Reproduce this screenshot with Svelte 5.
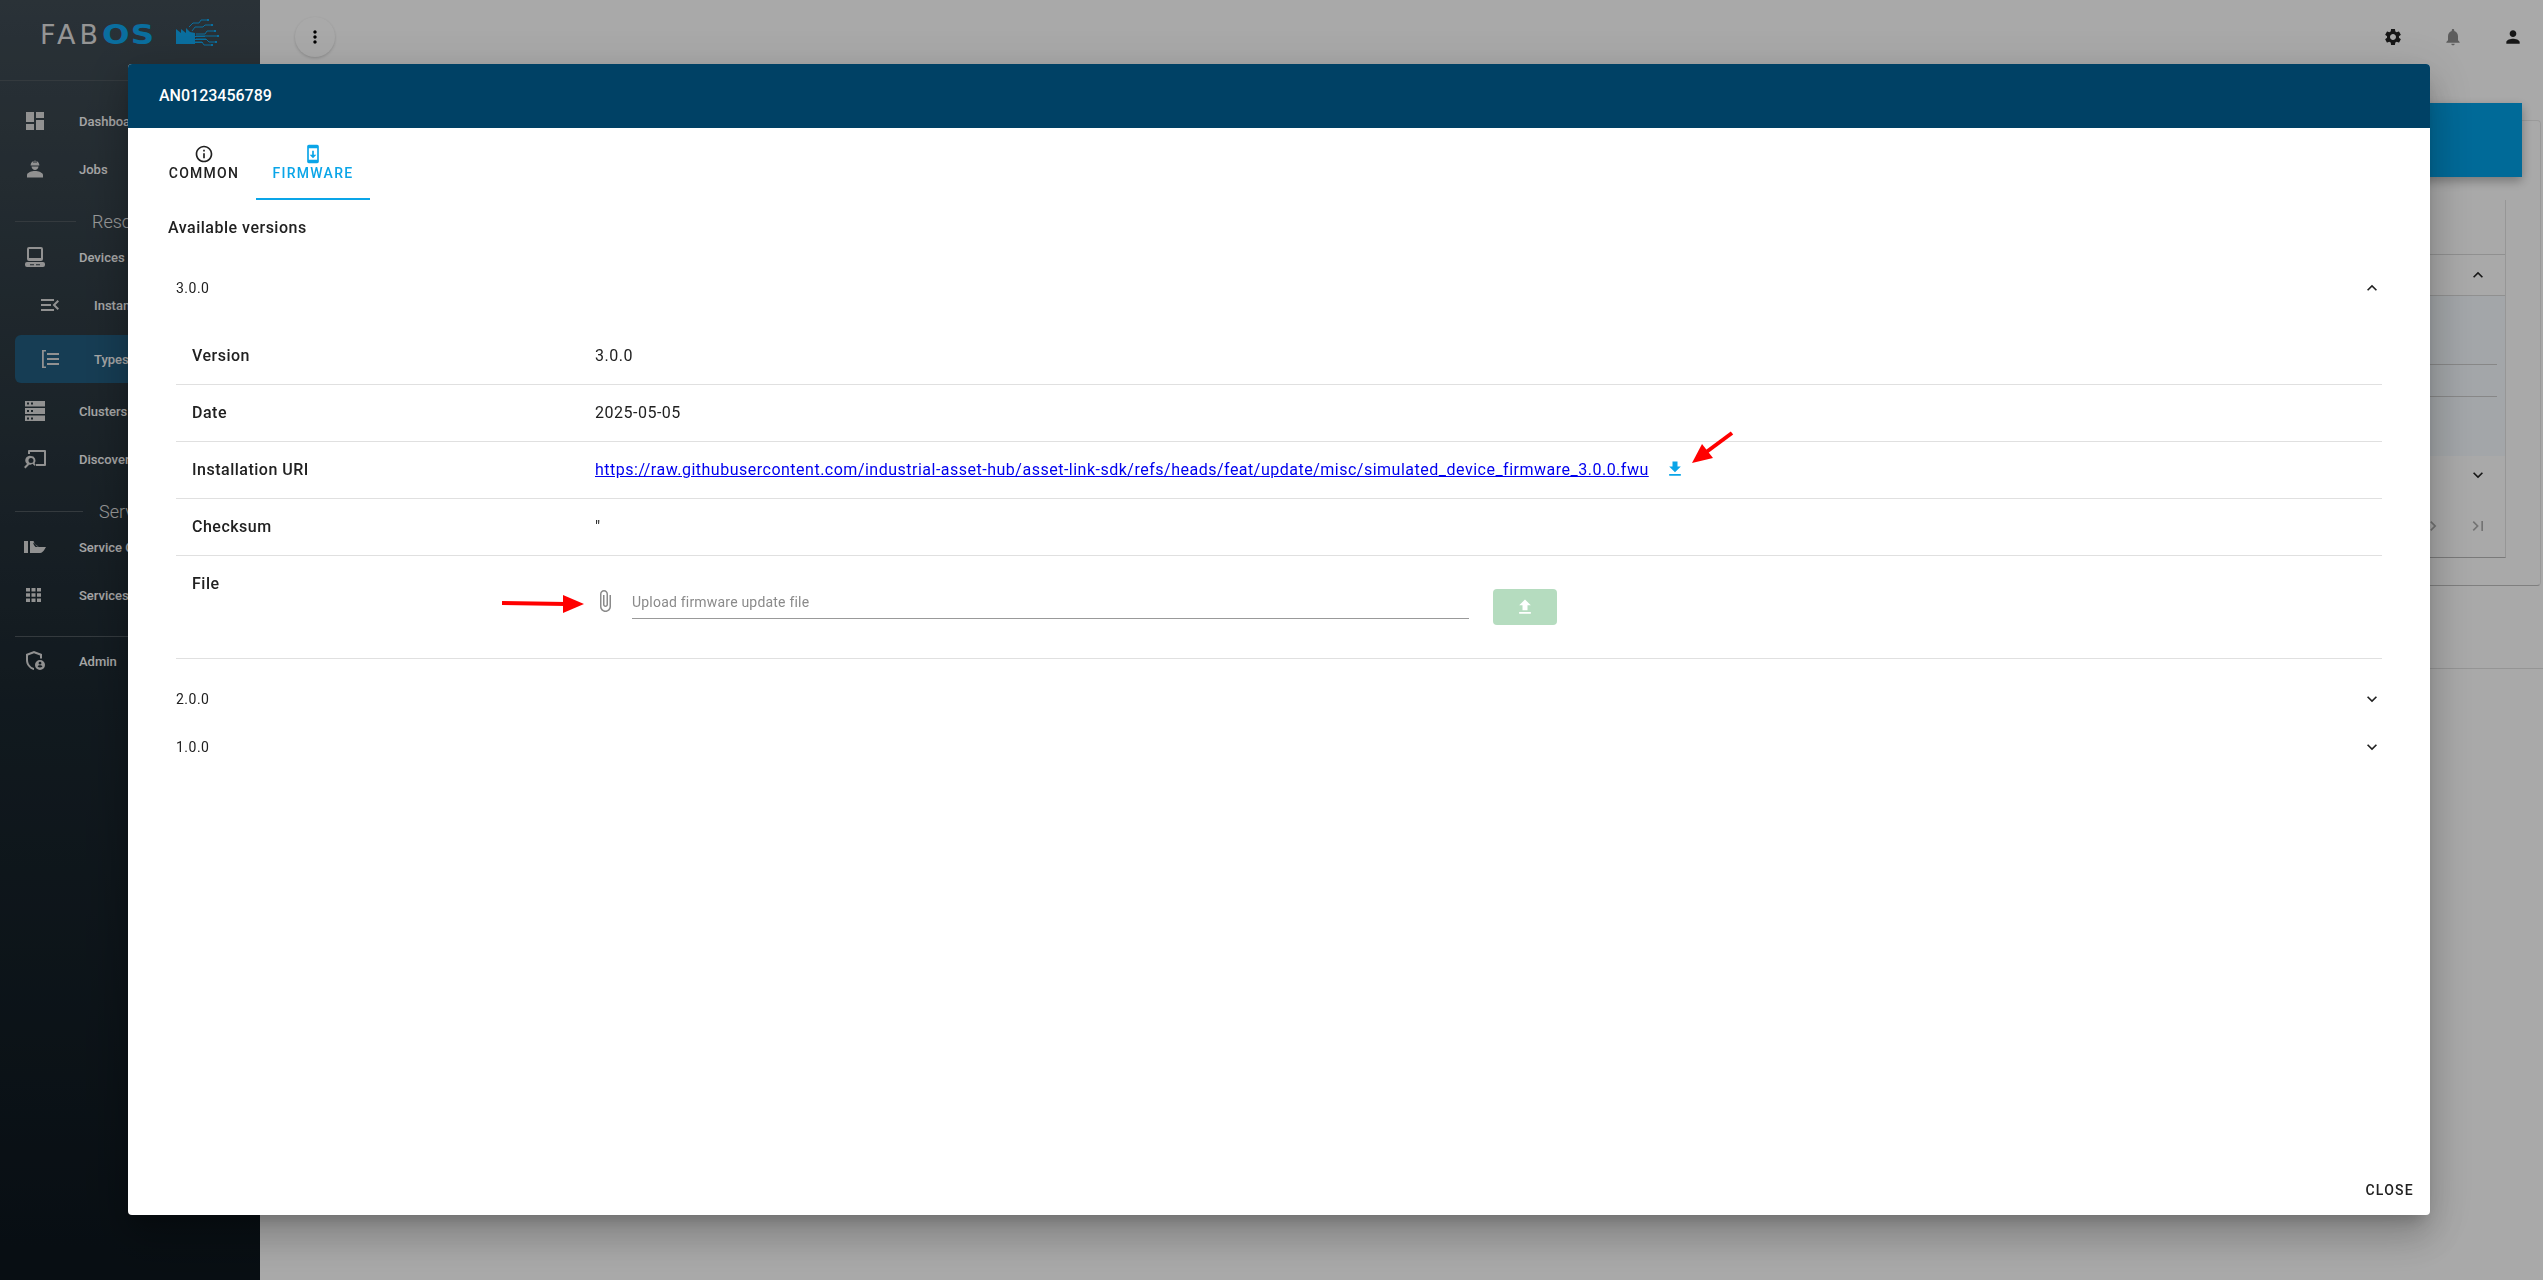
<script>
  const nav = [
    { label: "Dashboard", icon: "dashboard" },
    { label: "Jobs", icon: "jobs" },
    { section: "Resources", rule: 61 },
    { label: "Devices", icon: "devices" },
    { label: "Instances", icon: "instances", sub: true },
    { label: "Types", icon: "types", sub: true, active: true },
    { label: "Clusters", icon: "clusters" },
    { label: "Discovery", icon: "discovery" },
    { section: "Services", rule: 68 },
    { label: "Service Catalog", icon: "catalog" },
    { label: "Services", icon: "services" },
    { divider: true },
    { label: "Admin", icon: "admin" }
  ];

  const paths = {
    dashboard: "M3 13h8V3H3v10zm0 8h8v-6H3v6zm10 0h8V11h-8v10zm0-18v6h8V3h-8z",
    jobs: "M12 14c-3.200 0-8 1.500-8 4v2.500h16V18c0-2.500-4.800-4-8-4zM7.600 8.500h8.800c-.1-2.200-1-3.800-2.900-4.500v2h-1V3.400h-1V6h-1V4c-1.900.7-2.800 2.300-2.900 4.500zM8.500 9.500c.3 2 1.700 3.500 3.500 3.500s3.200-1.500 3.500-3.500h-7z",
    devices: "M6 2h12a2 2 0 0 1 2 2v10a2 2 0 0 1-2 2H6a2 2 0 0 1-2-2V4a2 2 0 0 1 2-2zm0 2v9h12V4H6zM4 17h16a2 2 0 0 1 2 2v1a2 2 0 0 1-2 2H4a2 2 0 0 1-2-2v-1a2 2 0 0 1 2-2zm3 2.200v1h4v-1H7zm6 0v1h4v-1h-4z",
    instances: "M3 18h13v-2H3v2zm0-5h10v-2H3v2zm0-7v2h13V6H3zm18 9.590L17.420 12 21 8.410 19.590 7l-5 5 5 5L21 15.590z",
    types: "M4 3h4v1.500H5.800v15H8V21H4V3zM9 6h12v2H9V6zm0 5h12v2H9v-2zm0 5h12v2H9v-2z",
    clusters: "M2 22h20v-5.500H2V22zm2-3.500h2v2H4v-2zm4 0h2v2H8v-2zM2 2v5.500h20V2H2zm4 3.500H4v-2h2v2zm4 0H8v-2h2v2zM2 15h20V9H2v6zm2-4h2v2H4v-2zm4 0h2v2H8v-2z",
    discovery: "M6 3h16a1 1 0 0 1 1 1v14a1 1 0 0 1-1 1H13v-2h8V5H7v2H5V4a1 1 0 0 1 1-1zM8 9a4.500 4.500 0 0 1 3.600 7.200l.9 1.300L12 19l-1.800-1.500-.6-.7A4.500 4.500 0 1 1 8 9zm0 2a2.500 2.500 0 1 0 0 5 2.500 2.500 0 0 0 0-5zM4.500 16.500l1.400 1.400L2.500 21.500 1 20l3.500-3.500z",
    catalog: "M1 6h4v12H1V6zm6 0h3.500c.8 3 2.800 5.200 5.500 6h7l-1.500 2.500c-.9 1.600-2.500 3.500-4.500 3.500H7V6zm3 1.500c.5 1.900 1.300 3.300 2.500 4.500H16z",
    services: "M3 5h4v3.500H3V5zm5.500 0h4v3.500h-4V5zm5.500 0h4v3.500h-4V5zM3 10.200h4v3.500H3v-3.500zm5.500 0h4v3.500h-4v-3.500zm5.500 0h4v3.500h-4v-3.500zM3 15.500h4V19H3v-3.500zm5.500 0h4V19h-4v-3.500zm5.500 0h4V19h-4v-3.500z",
    admin: "M11 2l8 3v4.500h-2V6.400l-6-2.200-6 2.200V11c0 3.700 2.400 7 6 8.100V21C6.400 19.900 3 15.700 3 11V5l8-3zm6 9a5 5 0 1 1 0 10 5 5 0 0 1 0-10zm0 1.800a1.400 1.400 0 1 0 0 2.800 1.400 1.400 0 0 0 0-2.800zm0 3.500c-1 0-2.200.5-2.400 1.100a3.200 3.200 0 0 0 4.800 0c-.2-.6-1.400-1.100-2.400-1.100z"
  };

  const details = [
    { key: "Version", value: "3.0.0" },
    { key: "Date", value: "2025-05-05" }
  ];
  const url = "https://raw.githubusercontent.com/industrial-asset-hub/asset-link-sdk/refs/heads/feat/update/misc/simulated_device_firmware_3.0.0.fwu";
</script>

<div class="app">
  <aside class="sidebar">
    <div class="logo">
      <span class="word">FAB<b>OS</b></span>
      <svg class="mark" viewBox="0 0 44 30" width="44" height="30" aria-hidden="true">
        <path class="fill" d="M1 26V11l5 4V11l5 4V10l4 4 5 1v3h10v1H20v2h12v1H20v2h8v1H20v1z" />
        <path class="trace" d="M14 9l4-4h6l2-3h6M17 13l3-4h8l2-2h6M21 16h9l2-3h7M21 18h18l3 0M21 21h10l3 3h6M20 24h7l2 3h7" />
        <path class="dots" d="M32 1h2v2h-2zM36 6h2v2h-2zM39 12h2v2h-2zM42 17h2v2h-2zM40 23h2v2h-2zM36 26h2v2h-2z" />
      </svg>
    </div>
    <nav>
      {#each nav as item}
        {#if item.section}
          <div class="section">
            <span class="rule" style="width:{item.rule}px"></span>
            <span>{item.section}</span>
          </div>
        {:else if item.divider}
          <div class="divider"></div>
        {:else}
          <div class="item" class:sub={item.sub} class:active={item.active}>
            <svg viewBox="0 0 24 24" width="24" height="24"><path d={paths[item.icon]} /></svg>
            <span>{item.label}</span>
          </div>
        {/if}
      {/each}
    </nav>
  </aside>

  <main>
    <header class="toolbar">
      <button class="more" aria-label="Menu">
        <svg viewBox="0 0 24 24" width="20" height="20"><path d="M12 8c1.100 0 2-.9 2-2s-.9-2-2-2-2 .9-2 2 .9 2 2 2zm0 2c-1.100 0-2 .9-2 2s.9 2 2 2 2-.9 2-2-.9-2-2-2zm0 6c-1.100 0-2 .9-2 2s.9 2 2 2 2-.9 2-2-.9-2-2-2z" /></svg>
      </button>
      <div class="actions">
        <svg viewBox="0 0 24 24" width="20" height="20"><path d="M19.140 12.940c.04-.3.06-.61.06-.94 0-.32-.02-.64-.07-.94l2.030-1.580c.18-.14.23-.41.12-.61l-1.920-3.320c-.12-.22-.37-.29-.59-.22l-2.390.96c-.5-.38-1.030-.7-1.620-.94l-.36-2.540c-.04-.24-.24-.41-.48-.41h-3.840c-.24 0-.43.17-.47.41l-.36 2.540c-.59.24-1.130.57-1.620.94l-2.390-.96c-.22-.08-.47 0-.59.22L2.740 8.870c-.12.21-.08.47.12.61l2.030 1.580c-.05.3-.09.63-.09.94s.02.64.07.94l-2.030 1.580c-.18.14-.23.41-.12.61l1.920 3.320c.12.22.37.29.59.22l2.390-.96c.5.38 1.030.7 1.620.94l.36 2.540c.05.24.24.41.48.41h3.840c.24 0 .44-.17.47-.41l.36-2.540c.59-.24 1.130-.56 1.620-.94l2.390.96c.22.08.47 0 .59-.22l1.920-3.320c.12-.22.07-.47-.12-.61l-2.010-1.580zM12 15.600c-1.980 0-3.600-1.620-3.600-3.600s1.620-3.600 3.600-3.600 3.600 1.620 3.600 3.600-1.620 3.600-3.600 3.600z" /></svg>
        <svg class="muted" viewBox="0 0 24 24" width="20" height="20"><path d="M12 22c1.100 0 2-.9 2-2h-4c0 1.100.89 2 2 2zm6-6v-5c0-3.070-1.640-5.640-4.500-6.320V4c0-.83-.67-1.500-1.500-1.500s-1.500.67-1.500 1.500v.68C7.630 5.360 6 7.920 6 11v5l-2 2v1h16v-1l-2-2z" /></svg>
        <svg viewBox="0 0 24 24" width="20" height="20"><path d="M12 12c2.210 0 4-1.790 4-4s-1.790-4-4-4-4 1.790-4 4 1.790 4 4 4zm0 2c-2.670 0-8 1.340-8 4v2h16v-2c0-2.660-5.330-4-8-4z" /></svg>
      </div>
    </header>
    <div class="page">
      <div class="banner"></div>
      <div class="outer">
        <div class="inner">
          <div class="head"></div>
          <div class="row">
            <svg viewBox="0 0 24 24" width="20" height="20"><path d="M12 8l-6 6 1.410 1.410L12 10.830l4.590 4.580L18 14z" /></svg>
          </div>
          <div class="tinted"><i></i><i></i></div>
          <div class="row closed">
            <svg viewBox="0 0 24 24" width="20" height="20"><path d="M16.590 8.590L12 13.170 7.410 8.590 6 10l6 6 6-6z" /></svg>
          </div>
          <div class="pager">
            <svg viewBox="0 0 24 24" width="20" height="20"><path d="M10 6L8.590 7.410 13.170 12l-4.580 4.590L10 18l6-6z" /></svg>
            <svg viewBox="0 0 24 24" width="20" height="20"><path d="M5.590 7.410L10.180 12l-4.590 4.590L7 18l6-6-6-6zM16 6h2v12h-2z" /></svg>
          </div>
        </div>
      </div>
      <div class="foot"></div>
    </div>
  </main>
</div>

<div class="overlay">
  <div class="dialog" role="dialog" aria-label="AN0123456789">
    <h2>AN0123456789</h2>
    <div class="tabs">
      <div class="tab">
        <svg viewBox="0 0 24 24" width="20" height="20"><path d="M11 7h2v2h-2V7zm0 4h2v6h-2v-6zm1-9C6.480 2 2 6.480 2 12s4.480 10 10 10 10-4.480 10-10S17.520 2 12 2zm0 18c-4.410 0-8-3.590-8-8s3.590-8 8-8 8 3.590 8 8-3.590 8-8 8z" /></svg>
        <span>COMMON</span>
      </div>
      <div class="tab selected">
        <svg viewBox="0 0 24 24" width="20" height="20"><path d="M17 1.010L7 1c-1.100 0-2 .9-2 2v18c0 1.100.9 2 2 2h10c1.100 0 2-.9 2-2V3c0-1.100-.9-1.990-2-1.990zM17 19H7V5h10v14zm-1-6h-3V8h-2v5H8l4 4 4-4z" /></svg>
        <span>FIRMWARE</span>
      </div>
    </div>
    <div class="content">
      <h3>Available versions</h3>
      <section class="panel">
        <div class="panel-head">
          <span>3.0.0</span>
          <svg viewBox="0 0 24 24" width="20" height="20"><path d="M12 8l-6 6 1.410 1.410L12 10.830l4.590 4.580L18 14z" /></svg>
        </div>
        <div class="table">
          {#each details as d}
            <div class="tr"><div class="th">{d.key}</div><div class="td">{d.value}</div></div>
          {/each}
          <div class="tr">
            <div class="th">Installation URI</div>
            <div class="td">
              <a href={url} onclick={(e) => e.preventDefault()}>{url}</a>
              <svg class="dl" viewBox="0 0 24 24" width="20" height="20"><path d="M19 9h-4V3H9v6H5l7 7 7-7zM5 18v2h14v-2H5z" /></svg>
            </div>
          </div>
          <div class="tr">
            <div class="th">Checksum</div>
            <div class="td"><span class="sum">"</span></div>
          </div>
          <div class="tr file">
            <div class="th">File</div>
            <div class="upload">
              <svg class="clip" viewBox="0 0 24 24" width="24" height="24"><path d="M16.500 6v11.500c0 2.210-1.790 4-4 4s-4-1.790-4-4V5c0-1.380 1.120-2.500 2.500-2.500s2.500 1.120 2.500 2.500v10.500c0 .55-.45 1-1 1s-1-.45-1-1V6H10v9.500c0 1.380 1.120 2.500 2.500 2.500s2.500-1.120 2.500-2.500V5c0-2.210-1.790-4-4-4S7 2.790 7 5v12.500c0 3.040 2.460 5.500 5.500 5.500s5.500-2.460 5.500-5.500V6h-1.500z" /></svg>
              <div class="field">Upload firmware update file</div>
              <button class="send" disabled aria-label="Upload">
                <svg viewBox="0 0 24 24" width="20" height="20"><path d="M9 16h6v-6h4l-7-7-7 7h4zm-4 2h14v2H5z" /></svg>
              </button>
            </div>
          </div>
        </div>
      </section>
      <section class="panel">
        <div class="panel-head">
          <span>2.0.0</span>
          <svg viewBox="0 0 24 24" width="20" height="20"><path d="M16.590 8.590L12 13.170 7.410 8.590 6 10l6 6 6-6z" /></svg>
        </div>
      </section>
      <section class="panel">
        <div class="panel-head">
          <span>1.0.0</span>
          <svg viewBox="0 0 24 24" width="20" height="20"><path d="M16.590 8.590L12 13.170 7.410 8.590 6 10l6 6 6-6z" /></svg>
        </div>
      </section>
    </div>
    <div class="actions-row"><button class="close">CLOSE</button></div>
  </div>

  <!-- red annotation arrows drawn over the screenshot -->
  <svg class="marks" viewBox="0 0 2543 1280" width="2543" height="1280" aria-hidden="true">
    <path d="M1732 433L1705 453" stroke="#f00" stroke-width="4" fill="none" />
    <path d="M1692 463L1702 444L1713 458z" fill="#f00" />
    <path d="M502 603L566 604" stroke="#f00" stroke-width="4" fill="none" />
    <path d="M584 604L563 595V613z" fill="#f00" />
  </svg>
</div>

<style>
  :global(body) {
    margin: 0;
    font-family: Roboto, "Liberation Sans", sans-serif;
    background: #fafafa;
  }
  .app {
    display: flex;
    height: 1280px;
    overflow: hidden;
  }
  .sidebar {
    width: 260px;
    flex: none;
    background: linear-gradient(180deg, #3e4a52 0%, #1a262e 55%, #0c151c 100%);
    color: #fafafa;
  }
  .logo {
    height: 81px;
    box-sizing: border-box;
    border-bottom: 1px solid #4d565c;
    display: flex;
    align-items: flex-start;
    gap: 14px;
    padding: 18px 0 0 40px;
  }
  .word {
    font-family: "DejaVu Sans", sans-serif;
    font-size: 27px;
    font-weight: 400;
    color: #dcdcdc;
    letter-spacing: 4px;
    line-height: 32px;
    width: 121px;
    margin-top: 1px;
    white-space: nowrap;
  }
  .word b {
    display: inline-block;
    color: #0fa3ea;
    font-weight: 700;
    letter-spacing: 1px;
    transform: scaleX(1.2);
    transform-origin: left center;
  }
  .mark .fill, .mark .dots { fill: #0fa3ea; }
  .mark .trace { fill: none; stroke: #0fa3ea; stroke-width: 1; }
  nav {
    padding: 16px 15px 0;
  }
  .item {
    height: 48px;
    display: flex;
    align-items: center;
    font-size: 13px;
    font-weight: 500;
    white-space: nowrap;
    color: #f5f5f5;
    padding-left: 8px;
    border-radius: 6px;
  }
  .item svg {
    fill: #d6d6d6;
    margin-right: 32px;
    flex: none;
  }
  .item.sub { padding-left: 23px; }
  .item.active {
    background: #215a7c;
    margin: 6px 0 4px;
  }
  .section {
    height: 40px;
    box-sizing: border-box;
    padding-top: 16px;
    display: flex;
    align-items: center;
    gap: 16px;
    font-size: 18px;
    font-weight: 300;
    color: #e2e2e2;
  }
  .rule { height: 1px; background: #4d565c; }
  .divider {
    height: 1px;
    background: #4d565c;
    margin-top: 17px;
  }
  main {
    flex: 1;
    min-width: 0;
    display: flex;
    flex-direction: column;
  }
  .toolbar {
    height: 74px;
    flex: none;
    display: flex;
    align-items: center;
    justify-content: space-between;
    padding: 0 20px 0 35px;
    box-sizing: border-box;
  }
  .more {
    width: 40px;
    height: 40px;
    border-radius: 50%;
    border: none;
    padding: 0;
    display: grid;
    place-items: center;
    background: #fafafa;
    box-shadow: 0 1px 3px rgba(0, 0, 0, .18);
  }
  .actions {
    display: flex;
    gap: 40px;
    align-items: center;
  }
  .actions svg { fill: #222; }
  .actions .muted { fill: #8a8a8a; }
  .page {
    position: relative;
    flex: 1;
    display: flex;
    flex-direction: column;
  }
  .banner {
    height: 74px;
    margin: 29px 21px 0 0;
    background: #009ce0;
    box-shadow: 0 4px 10px rgba(0, 0, 0, .3);
    position: relative;
    z-index: 1;
  }
  .outer {
    margin: -57px 2px 0 0;
    height: 466px;
    box-sizing: border-box;
    border: 1px solid #e4e4e4;
    border-bottom-color: #bbb;
    border-radius: 4px;
    padding: 79px 34px 0 0;
  }
  .inner {
    height: 358px;
    box-sizing: border-box;
    border-right: 1px solid #ddd;
    border-bottom: 1px solid #b4b4b4;
    display: flex;
    flex-direction: column;
  }
  .head {
    height: 54px;
    border-bottom: 1px solid #d4d4d4;
    flex: none;
  }
  .row {
    height: 40px;
    flex: none;
    display: flex;
    align-items: center;
    justify-content: flex-end;
    padding-right: 17px;
    border-bottom: 1px solid #d4d4d4;
  }
  .row svg { fill: #222; }
  .row.closed { height: 38px; border: none; }
  .tinted {
    height: 160px;
    flex: none;
    background: #f0f5f9;
  }
  .tinted i {
    display: block;
    height: 1px;
    background: #c8c8c8;
    margin: 68px 8px 0 0;
  }
  .tinted i + i { margin-top: 31px; }
  .pager {
    flex: 1;
    display: flex;
    justify-content: flex-end;
    align-items: flex-end;
    gap: 25px;
    padding: 0 17px 21px 0;
  }
  .pager svg { fill: #aaa; }
  .foot {
    height: 1px;
    background: #dcdcdc;
    margin-top: 82px;
  }

  .overlay {
    position: fixed;
    inset: 0;
    padding: 64px 113px 65px 128px;
    box-sizing: border-box;
    background: rgba(0, 0, 0, .32);
    display: flex;
    z-index: 10;
  }
  .dialog {
    flex: 1;
    min-width: 0;
    background: #fff;
    border-radius: 4px;
    overflow: hidden;
    display: flex;
    flex-direction: column;
    box-shadow: 0 11px 15px -7px rgba(0, 0, 0, .2), 0 24px 38px 3px rgba(0, 0, 0, .14), 0 9px 46px 8px rgba(0, 0, 0, .12);
  }
  h2 {
    margin: 0;
    height: 64px;
    flex: none;
    padding-left: 31px;
    background: #004165;
    color: #fff;
    font-size: 16px;
    font-weight: 500;
    line-height: 64px;
  }
  .tabs {
    display: flex;
    height: 72px;
    flex: none;
    padding-left: 24px;
  }
  .tab {
    width: 104px;
    box-sizing: border-box;
    display: flex;
    flex-direction: column;
    align-items: center;
    padding-top: 16px;
    font-size: 14px;
    font-weight: 500;
    letter-spacing: 1.25px;
    color: #212121;
    fill: #212121;
    line-height: 16px;
    gap: 1px;
  }
  .tab.selected {
    width: 114px;
    color: #0aa5e8;
    fill: #0aa5e8;
    border-bottom: 2px solid #0aa5e8;
  }
  .content {
    flex: 1;
    min-height: 0;
    padding: 0 48px 0 40px;
    color: #212121;
  }
  h3 {
    margin: 0;
    height: 64px;
    font-size: 16px;
    font-weight: 500;
    letter-spacing: .5px;
    line-height: 56px;
  }
  .panel-head {
    height: 48px;
    display: flex;
    align-items: center;
    justify-content: space-between;
    padding: 0 0 0 8px;
    font-size: 14px;
    letter-spacing: .5px;
  }
  .panel-head svg { fill: #212121; }
  .table {
    margin: 16px 0 16px 8px;
    font-size: 16px;
    letter-spacing: .5px;
  }
  .tr {
    display: flex;
    height: 57px;
    box-sizing: border-box;
    align-items: center;
    padding-bottom: 2px;
    border-bottom: 1px solid #e0e0e0;
  }
  .tr.file {
    height: 103px;
    align-items: flex-start;
    padding-bottom: 0;
  }
  .th {
    width: 403px;
    flex: none;
    box-sizing: border-box;
    padding-left: 16px;
    font-weight: 500;
  }
  .tr.file .th { padding-top: 18px; line-height: 20px; }
  .td {
    padding-left: 16px;
    display: flex;
    align-items: center;
  }
  a { color: #0000ee; }
  .dl {
    fill: #0aa5e8;
    margin-left: 16px;
  }
  .sum { color: #212121; }
  .upload {
    display: flex;
    align-items: flex-start;
    padding: 33px 0 0 14px;
    letter-spacing: normal;
  }
  .clip {
    fill: #8a8a8a;
    flex: none;
    margin-right: 15px;
  }
  .field {
    width: 837px;
    height: 30px;
    box-sizing: border-box;
    border-bottom: 1px solid #999;
    font-size: 14px;
    line-height: 26px;
    letter-spacing: .2px;
    color: #8a8a8a;
  }
  .send {
    width: 64px;
    height: 36px;
    margin-left: 24px;
    border: none;
    border-radius: 4px;
    background: #b5dcbf;
    display: grid;
    place-items: center;
    fill: #fff;
    padding: 0;
  }
  .actions-row {
    flex: none;
    display: flex;
    justify-content: flex-end;
    padding: 0 16px 7px 0;
  }
  .close {
    border: none;
    background: none;
    height: 36px;
    padding: 0;
    font: 500 14px Roboto, sans-serif;
    letter-spacing: 1.25px;
    color: #212121;
  }
  .marks {
    position: absolute;
    left: 0;
    top: 0;
    pointer-events: none;
  }
</style>
